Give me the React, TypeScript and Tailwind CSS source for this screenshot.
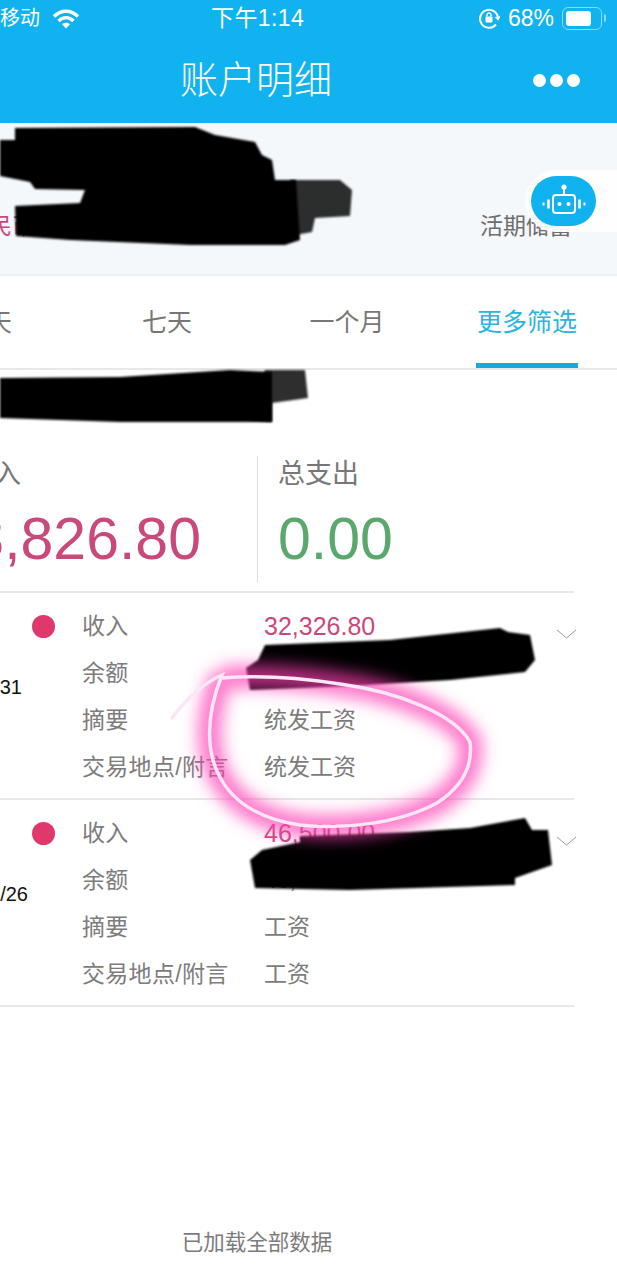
const records = [
  { date: "2019/08/31", dateWidth: "w-[112px]", amount: "32,326.80", balance: "3", note: "统发工资" },
  { date: "2019/07/26", dateWidth: "w-[118px]", amount: "46,500.00", balance: "46,", note: "工资" },
];

const ring =
  "M172 718C185 700 205 682 222 675C212 700 205 730 213 760C223 795 252 818 300 825C345 830 400 823 437 803C463 786 473 765 470 742C455 715 400 692 340 684C300 678 260 675 222 678";
const ringBody =
  "M222 675C212 700 205 730 213 760C223 795 252 818 300 825C345 830 400 823 437 803C463 786 473 765 470 742C455 715 400 692 340 684C300 678 260 675 222 678";

function Wifi() {
  return (
    <svg width="28" height="21" viewBox="0 0 28 21" fill="none" stroke="white" strokeWidth="3.4">
      <path d="M2 8.5C9 1.5 19 1.5 26 8.5" />
      <path d="M6.5 13C11 8.5 17 8.5 21.5 13" />
      <path d="M14 20.5L10 16.3C12.2 14.3 15.8 14.3 18 16.3Z" fill="white" stroke="none" />
    </svg>
  );
}

function RotationLock() {
  return (
    <svg width="22" height="22" viewBox="0 0 22 22" fill="none" stroke="white" strokeWidth="2">
      <path d="M18 17.5A9 9 0 1 1 20 11" />
      <path d="M17.5 10L20 12.5L21.8 9.5" strokeWidth="1.5" />
      <rect x="7.5" y="9.5" width="7" height="6" rx="1" fill="white" stroke="none" />
      <path d="M9 9.5V8a2 2 0 0 1 4 0v1.5" strokeWidth="1.4" />
    </svg>
  );
}

function Battery() {
  return (
    <div className="flex items-center gap-[2px]">
      <div className="h-[23px] w-[40px] rounded-[6px] border border-white/50 p-[3px]">
        <div className="h-full w-[25px] rounded-[3px] bg-white" />
      </div>
      <div className="h-[8px] w-[2px] rounded-r-sm bg-white/50" />
    </div>
  );
}

function Bot() {
  return (
    <svg width="44" height="36" viewBox="0 0 44 36" fill="none" stroke="white" strokeWidth="2">
      <circle cx="22" cy="4" r="2.6" fill="white" stroke="none" />
      <path d="M22 6V12" />
      <rect x="11" y="12" width="22" height="18" rx="3" />
      <circle cx="17.5" cy="21" r="2" fill="white" stroke="none" />
      <circle cx="26.5" cy="21" r="2" fill="white" stroke="none" />
      <path d="M6.5 16.5V25.5M37.5 16.5V25.5" strokeWidth="2.6" />
      <path d="M1.5 19.5V22.5M42.5 19.5V22.5" strokeWidth="2" />
    </svg>
  );
}

function Record({ date, dateWidth, amount, balance, note }: (typeof records)[number]) {
  return (
    <div className="relative flex h-[207px] w-[574px] border-b-2 border-[#e8e8e8] pt-[10px] text-[23px] leading-[47px] text-[#7c7c7c]">
      <div className="flex w-[82px] shrink-0 flex-col">
        <div className="flex h-[47px] items-center justify-end pr-[27px]">
          <span className="h-[23px] w-[23px] rounded-full bg-[#e0386a]" />
        </div>
        <div className={`-ml-[90px] flex h-[47px] items-center justify-end whitespace-nowrap text-[20px] text-[#111] ${dateWidth}`}>
          <span className="mt-[28px]">{date}</span>
        </div>
      </div>
      <div className="w-[182px] shrink-0 whitespace-nowrap tracking-[0.3px]">
        <div>收入</div>
        <div>余额</div>
        <div>摘要</div>
        <div>交易地点/附言</div>
      </div>
      <div className="flex-1 whitespace-nowrap">
        <div className="text-[25px] text-[#c9497a]">{amount}</div>
        <div>{balance}</div>
        <div>{note}</div>
        <div>{note}</div>
      </div>
      <svg className="absolute right-[-3px] top-[36px]" width="21" height="10" viewBox="0 0 21 10" fill="none" stroke="#999" strokeWidth="1">
        <path d="M1 1L10.5 9L20 1" />
      </svg>
    </div>
  );
}

export default function App() {
  return (
    <div className="relative h-[1280px] w-[617px] overflow-hidden bg-white [font-family:'Liberation_Sans','Noto_Sans_CJK_SC',sans-serif]">
      <header className="bg-[#10b2f0] text-white">
        <div className="flex h-[40px] items-center pb-[4px] text-[23px]">
          <div className="flex w-[211px] items-center gap-[12px] whitespace-nowrap">
            <span className="-ml-[40px] text-[20px]">中国移动</span>
            <Wifi />
          </div>
          <div className="w-[92px] whitespace-nowrap tracking-[0.4px]">下午1:14</div>
          <div className="flex flex-1 items-center justify-end gap-[8px] pr-[11px]">
            <RotationLock />
            <span className="whitespace-nowrap">68%</span>
            <Battery />
          </div>
        </div>
        <div className="flex h-[83px] items-center pb-[2px]">
          <h1 className="w-[512px] text-center text-[38px] font-light">账户明细</h1>
          <div className="ml-[21px] flex gap-[4px]">
            <span className="h-[13px] w-[13px] rounded-full bg-white" />
            <span className="h-[13px] w-[13px] rounded-full bg-white" />
            <span className="h-[13px] w-[13px] rounded-full bg-white" />
          </div>
        </div>
      </header>

      <section className="flex h-[153px] items-end justify-between border-b-2 border-[#eef0f2] bg-[#f5f8fb] pb-[31px] text-[23px]">
        <div className="flex w-[35px] justify-end whitespace-nowrap text-[#c9497a]">人民币</div>
        <div className="pr-[45px] text-[#6e6e6e]">活期储蓄</div>
      </section>

      <nav className="grid h-[94px] w-[720px] -translate-x-[103px] grid-cols-4 border-b-2 border-[#e6e8ea] text-center text-[25px] text-[#777]">
        <div className="flex items-center justify-center pt-[2px]">今天</div>
        <div className="flex items-center justify-center pt-[2px]">七天</div>
        <div className="flex items-center justify-center pt-[2px]">一个月</div>
        <div className="relative flex items-center justify-center pt-[2px] text-[#2db3e0]">
          更多筛选
          <span className="absolute bottom-0 left-[39px] h-[5px] w-[102px] bg-[#1aa9dd]" />
        </div>
      </nav>

      <section className="h-[223px] w-[574px] border-b-2 border-[#e8e8e8] pt-[86px]">
        <div className="flex h-[126px]">
          <div className="flex w-[257px] flex-col items-end pr-[56px]">
            <div className="w-[201px] whitespace-nowrap text-[27px] leading-[36px] text-[#777]">
              <span className="-ml-[60px]">总收入</span>
            </div>
            <div className="mt-[17px] whitespace-nowrap text-[59px] leading-[60px] text-[#c9497a]">78,826.80</div>
          </div>
          <div className="border-l border-[#dcdcdc] pl-[20px]">
            <div className="text-[27px] leading-[36px] text-[#777]">总支出</div>
            <div className="mt-[17px] text-[59px] leading-[60px] text-[#5aa86c]">0.00</div>
          </div>
        </div>
      </section>

      {records.map((record) => (
        <Record key={record.amount} {...record} />
      ))}

      <footer className="mt-[220px] w-[514px] text-center text-[21.5px] text-[#7c7c7c]">已加载全部数据</footer>

      {/* floating assistant */}
      <div className="absolute left-[525px] top-[170px] h-[62px] w-[92px] rounded-l-[31px] bg-white/90 pl-[6px] pt-[6px]">
        <div className="flex h-[50px] w-[65px] items-center justify-center rounded-[26px] bg-[#10b2f0]">
          <Bot />
        </div>
      </div>

      {/* photo markup: black redaction and the pink ring */}
      <svg className="pointer-events-none absolute left-0 top-0" width="617" height="1280" viewBox="0 0 617 1280" fill="none">
        <defs>
          <filter id="soft" x="-5%" y="-10%" width="110%" height="120%">
            <feGaussianBlur stdDeviation="1.2" />
          </filter>
          <filter id="glow" x="-20%" y="-20%" width="140%" height="140%">
            <feGaussianBlur stdDeviation="8" />
          </filter>
        </defs>
        <g fill="#000" filter="url(#soft)">
          <path d="M15 128L195 127L215 135L255 142L262 155L272 160L275 180L296 180L300 240L285 245L190 245L70 240L16 236L15 206L80 203L85 190L35 189L30 182L0 176V140L15 140Z" />
          <path d="M0 378L120 377L230 370L272 372L272 422L120 422L0 418Z" />
          <path d="M265 645L390 640L500 628L508 632L530 635L535 660L525 672L450 680L350 686L250 690L246 668L258 660Z" />
          <path d="M250 860L262 850L300 842L300 836L410 832L470 828L525 818L532 830L548 830L552 865L515 878L515 885L350 890L255 888Z" />
        </g>
        <g fill="#000" fillOpacity="0.82" filter="url(#soft)">
          <path d="M290 180L340 180L352 190L350 216L315 218L312 232L290 236Z" />
          <path d="M265 370L305 370L308 398L272 403L272 422L250 420Z" />
        </g>
        <path d={ringBody} stroke="#ff3fb5" strokeWidth="24" strokeOpacity="0.7" filter="url(#glow)" />
        <path d={ring} stroke="#fbe6f6" strokeWidth="3.5" strokeLinecap="round" />
      </svg>
    </div>
  );
}
